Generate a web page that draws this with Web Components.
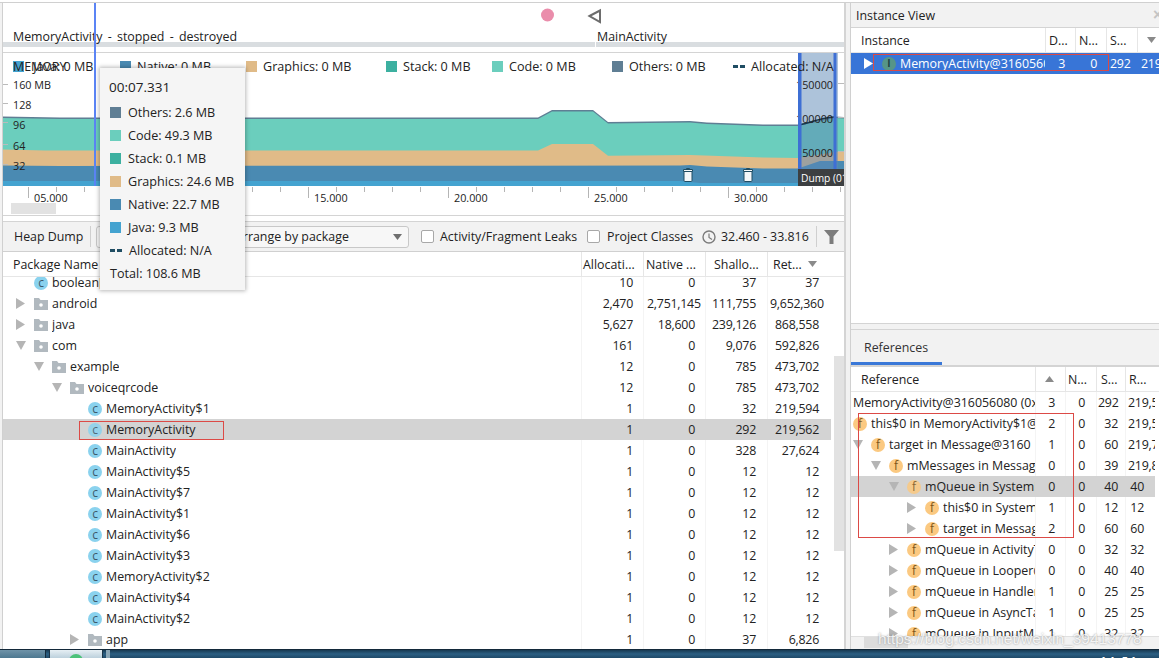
<!DOCTYPE html>
<html lang="en"><head><meta charset="utf-8"><title>Memory Profiler</title>
<style>
html,body{margin:0;padding:0;background:#fff;overflow:hidden}
body{width:1159px;height:658px;font:12.4px "Open Sans","Noto Sans",sans-serif;color:#222}
</style></head><body>
<profiler-app></profiler-app>
<script>
const FONT='"Open Sans","Noto Sans",sans-serif';
function shadow(el,html){el.attachShadow({mode:'open'}).innerHTML=html;return el.shadowRoot}

class TreeGlyph extends HTMLElement{
  connectedCallback(){
    const k=this.getAttribute('kind');
    let inner='';
    if(k==='r'||k==='w')inner=`<svg width="9" height="11" viewBox="0 0 9 11"><path d="M0 0L9 5.5L0 11Z" fill="${k==='w'?'#fff':'#b5b5b5'}"/></svg>`;
    else if(k==='d')inner=`<svg width="10" height="9" viewBox="0 0 10 9"><path d="M0 0H10L5 9Z" fill="#b5b5b5"/></svg>`;
    else if(k==='folder')inner=`<svg width="14" height="12" viewBox="0 0 14 12"><path d="M0 0H5L6.5 2H14V12H0Z" fill="#b1b9bf"/><circle cx="7" cy="7" r="1.8" fill="#fff"/></svg>`;
    else{
      const t={c:'c',f:'f',i:'I'}[k];
      inner=`<b class="${k}">${t}</b>`;
    }
    shadow(this,`<style>
      :host{display:flex;align-items:center;justify-content:flex-start;width:18px;flex:none;height:100%}
      svg{display:block}
      b{width:14px;height:14px;border-radius:50%;display:flex;align-items:center;justify-content:center;font:400 12px/13px ${FONT}}
      .c{background:#8ad2ee;color:#3d5a6b}
      .f{background:#fbc981;color:#7d5518}
      .i{background:#5b9b7c;color:#16382a;font-weight:700;font-size:10px}
      :host([dim]) b{opacity:.86}
    </style>${inner}`);
  }
}
customElements.define('tree-glyph',TreeGlyph);

class TreeRow extends HTMLElement{
  constructor(data,cols,base){
    super();
    const g=(k)=>k?`<tree-glyph kind="${k}" ${data.sel?'dim':''}></tree-glyph>`:'';
    const arrow=data.a==='n'?'<span class="blank"></span>':g(data.a);
    const cells=data.v.map((v,i)=>{const c=cols[i+1];return `<div class="n" style="padding:0 ${c.r}px 0 ${c.l}px">${v}</div>`}).join('');
    shadow(this,`<style>
      :host{display:grid;grid-template-columns:${cols.map(c=>c.w+'px').join(' ')};height:21px;line-height:21px;white-space:nowrap;overflow:hidden;${data.sel?`background:${data.sel};`:''}${data.sel==='#3875d7'?'color:#fff;':''}}
      .t{display:flex;align-items:center;overflow:hidden;padding-left:${base+data.d*18}px;min-width:0}
      .t span.l{overflow:hidden;white-space:nowrap}
      .blank{width:18px;flex:none}
      .n{box-sizing:border-box;text-align:right;min-width:0;white-space:nowrap;letter-spacing:-.25px;border-left:1px solid ${data.sel?'transparent':'#f4f4f4'};${data.clip?'overflow:hidden;':''}}
    </style><div class="t">${arrow}${g(data.i)}<span class="l">${data.t}</span></div>${cells}`);
  }
}
customElements.define('tree-row',TreeRow);

class TreeTable extends HTMLElement{
  setup(cfg){
    const r=shadow(this,`<style>
      :host{display:flex;flex-direction:column;background:#fff;overflow:hidden;min-height:0}
      .h{display:grid;grid-template-columns:${cfg.cols.map(c=>c.w+'px').join(' ')};height:${cfg.hh}px;border-bottom:1px solid #e6e6e6;flex:none;background:#fff;position:relative;z-index:1;white-space:nowrap;overflow:hidden}
      .h div{box-sizing:border-box;overflow:hidden;border-left:1px solid #e6e6e6;display:flex;align-items:center;justify-content:space-between}
      .h div:first-child{border-left:0}
      .b{flex:1;overflow:hidden;min-height:0}
      .in{margin-top:${cfg.off||0}px;width:${cfg.cols.reduce((a,c)=>a+c.w,0)}px}
      svg{flex:none}
    </style><div class="h">${cfg.head.map((h)=>`<div style="padding-left:${h.p}px;padding-right:${h.pr||0}px">${h.t?`<span>${h.t}</span>`:''}${h.s==='d'?'<svg width="9" height="6"><path d="M0 0H9L4.5 6Z" fill="#8a8a8a"/></svg>':h.s==='u'?'<svg width="9" height="6"><path d="M0 6H9L4.5 0Z" fill="#8a8a8a"/></svg>':''}</div>`).join('')}</div><div class="b"><div class="in"></div></div>`);
    const inn=r.querySelector('.in');
    cfg.rows.forEach(d=>inn.appendChild(new TreeRow(d,cfg.cols,cfg.base)));
  }
}
customElements.define('tree-table',TreeTable);

class EventStrip extends HTMLElement{
  connectedCallback(){
    shadow(this,`<style>
      :host{display:block;height:49px;background:#fff;border-bottom:1px solid #d4d4d4;position:relative;flex:none;overflow:hidden}
      svg{position:absolute;left:0;top:0}
      .bar{position:absolute;left:0;right:0;top:39px;height:5px;background:linear-gradient(90deg,#d9dde0 592px,#fff 592px,#fff 593px,#d9dde0 593px)}
      .lab{position:absolute;top:24px;line-height:19px;white-space:nowrap}
    </style>
    <div class="bar"></div>
    <svg width="841" height="30" viewBox="3 3 841 30"><circle cx="547.5" cy="15" r="6.5" fill="#ea8dab"/><path d="M589.5 16L600 10.5V22Z" fill="none" stroke="#6d6d6d" stroke-width="2"/></svg>
    <span class="lab" style="left:10px;word-spacing:2px">MemoryActivity - stopped - destroyed</span>
    <span class="lab" style="left:594px">MainActivity</span>`);
  }
}
customElements.define('event-strip',EventStrip);

class LegendKey extends HTMLElement{
  connectedCallback(){
    const c=this.getAttribute('color');
    shadow(this,`<style>
      :host{display:flex;align-items:center;gap:var(--gap,6px);white-space:nowrap;flex:none;font-size:12.6px}
      i{width:11px;height:11px;background:${c};flex:none;display:block}
      i.dash{height:3px;width:12px;background:linear-gradient(90deg,${c} 5px,transparent 5px,transparent 7px,${c} 7px)}
    </style><i class="${this.hasAttribute('dash')?'dash':''}"></i><span><slot></slot></span>`);
  }
}
customElements.define('legend-key',LegendKey);

class MemoryChart extends HTMLElement{
  connectedCallback(){
    const ticks=[];let labels='';
    for(let x=28;x<844;x+=28){const m=x%140===28;ticks.push(`<path d="M${x+.5} 187V${m?198:192}" stroke="#b5b5b5"/>`);
      if(m&&x!==168){const s=5*((x-28)/140+1);labels+=`<text x="${x+6}" y="202">${String(s).padStart(2,'0')}.000</text>`;}}
    const L=(txt,y)=>`<text x="13" y="${y}">${txt}</text>`;
    const R=(txt,y)=>`<text x="833" y="${y}" text-anchor="end">${txt}</text>`;
    const yt=[84,103,122,144,164].map(y=>`<path d="M3 ${y+.5}H8" stroke="#bbb"/>`).join('');
    const rt=[83,117,151].map(y=>`<path d="M838 ${y+.5}H844" stroke="#bbb"/>`).join('');
    shadow(this,`<style>
      :host{display:block;position:relative;flex:none;height:162px;background:#fff;border-bottom:1px solid #d4d4d4}
      svg{display:block;font-family:${FONT};font-size:10.8px;fill:#222}
      .legend{position:absolute;left:0;top:0;display:flex;height:26px;padding-left:10px}
      .legend legend-key{width:var(--w)}
      .title{position:absolute;left:10px;top:4px;line-height:19px}
      .thumb{position:absolute;left:8px;top:150px;width:45px;height:11px;background:#e2e2e2}
    </style>
    <svg width="841" height="133" viewBox="3 53 841 133">
      <polygon fill="#5f7e94" points="3,116.5 60,117.5 538,117.5 552,110 593,110 608,122 690,121 707,122.5 763,124.5 798,124.5 835,116.5 844,117 844,186 3,186"/>
      <polygon fill="#6bcebd" points="3,118 60,119 538,119 552,111.5 593,111.5 608,123.5 690,122.5 707,124 763,126 798,126 835,118 844,118.5 844,186 3,186"/>
      <polygon fill="#e0bb88" points="3,149.5 45,150.5 538,150.5 552,144 593,144 608,155.7 690,155 763,157.5 798,158 835,152 844,151 844,186 3,186"/>
      <polygon fill="#4a8ab2" points="3,165.5 60,166 680,165.5 690,165 707,166.5 763,168.5 798,168.5 820,161 844,161 844,186 3,186"/>
      <polygon fill="#44a3d0" points="3,181 680,181 700,183 844,183 844,186 3,186"/>
      ${yt}${rt}
      ${L('160 MB',89)}${L('128',109)}${L('96',129)}${L('64',150)}${L('32',169.5)}
      ${[688,748].map(x=>`<g transform="translate(${x-5} 168)" fill="#f4f7f9" stroke="#1f4d63" stroke-width="1"><path d="M1 3.500H9V12.500Q9 13.500 8 13.500H2Q1 13.500 1 12.500Z"/><path d="M.5 1.500H9.500V3.500H.5Z"/><path d="M3.500 1.500V.5H6.500V1.500" fill="none"/></g>`).join('')}
      <rect x="798" y="53" width="40" height="133" fill="#5c87b5" fill-opacity=".5"/>
      <path d="M801 124.500C812 122 820 118 834 117" fill="none" stroke="#17384c" stroke-width="1.500"/>
      ${R('150000',89)}${R('100000',123)}${R('50000',157)}
      <rect x="798" y="53" width="3.500" height="133" fill="#3e6fd4"/><rect x="833.500" y="53" width="3" height="133" fill="#3e6fd4"/>
      <rect x="798" y="169" width="46" height="17" fill="#3c3f41"/>
      <text x="801" y="181.500" style="fill:#fff;font-size:10.200px">Dump (01</text>
    </svg>
    <svg class="axis" width="841" height="30" viewBox="3 186 841 30">${ticks.join('')}${labels}</svg>
    <div class="thumb"></div>
    <div class="legend">
      <legend-key style="--w:107px" color="#44a3d0"><span>&nbsp;Java: 0 MB</span></legend-key>
      <legend-key style="--w:126px" color="#4a8ab2">Native: 0 MB</legend-key>
      <legend-key style="--w:140px" color="#e0bb88">Graphics: 0 MB</legend-key>
      <legend-key style="--w:106px" color="#3cb0a0">Stack: 0 MB</legend-key>
      <legend-key style="--w:120px" color="#6bcebd">Code: 0 MB</legend-key>
      <legend-key style="--w:121px" color="#5f7e94">Others: 0 MB</legend-key>
      <legend-key style="--w:110px" color="#1f4d63" dash>Allocated: N/A</legend-key>
    </div>
    <div class="title">MEMORY</div>`);
  }
}
customElements.define('memory-chart',MemoryChart);

class HeapToolbar extends HTMLElement{
  connectedCallback(){
    shadow(this,`<style>
      :host{display:flex;align-items:center;height:29px;margin-top:5px;background:#f2f2f2;border-top:1px solid #d4d4d4;border-bottom:1px solid #d0d0d0;padding-left:11px;white-space:nowrap;flex:none}
      .sep{width:1px;height:21px;background:#cfcfcf;flex:none}
      .combo{box-sizing:border-box;width:313px;height:22px;margin-left:5px;border:1px solid #c8c8c8;border-radius:3px;background:#f7f7f7;display:flex;align-items:center;justify-content:space-between;padding:0 6px 0 138px;flex:none}
      .cb{width:11px;height:11px;border:1px solid #a8a8a8;border-radius:2px;background:#fff;flex:none}
      svg{display:block;flex:none}
    </style>
    <span style="width:76px">Heap Dump</span><span class="sep"></span>
    <div class="combo"><span>Arrange by package</span><svg width="9" height="6"><path d="M0 0H9L4.500 6Z" fill="#6f6f6f"/></svg></div>
    <span class="cb" style="margin-left:12px"></span><span style="margin-left:6px;width:142px">Activity/Fragment Leaks</span>
    <span class="cb" style="margin-left:5px"></span><span style="margin-left:7px;width:95px">Project Classes</span>
    <svg width="14" height="14" viewBox="0 0 14 14"><circle cx="7" cy="7" r="6" fill="none" stroke="#7b7b7b" stroke-width="1.400"/><path d="M7 3.500V7.500L10 9.500" fill="none" stroke="#7b7b7b" stroke-width="1.200"/></svg>
    <span style="margin-left:5px;width:95px">32.460 - 33.816</span>
    <span class="sep"></span>
    <svg style="margin-left:7px" width="15" height="14" viewBox="0 0 15 14"><path d="M0 0H15L9.500 6.500V14H5.500V6.500Z" fill="#7c7c7c"/></svg>`);
  }
}
customElements.define('heap-toolbar',HeapToolbar);

class TabTitle extends HTMLElement{
  connectedCallback(){
    shadow(this,`<style>
      :host{display:flex;align-items:center;justify-content:space-between;height:24px;background:#f2f2f2;border-bottom:1px solid #d4d4d4;padding:0 0 0 5px;flex:none}
      i{color:#c4c4c4;font:700 16px/16px "Liberation Sans",sans-serif;width:6px;overflow:hidden}
    </style><span><slot></slot></span><i>×</i>`);
  }
}
customElements.define('tab-title',TabTitle);

class ProfilerApp extends HTMLElement{
  connectedCallback(){
    const r=shadow(this,`<style>
      :host{display:block;position:relative;width:1159px;height:658px;overflow:hidden;background:#fff}
      .top{height:2px;background:#fff;border-bottom:1px solid #d0d0d0}
      .main{display:flex;height:646px;padding-left:2px;background:#f2f2f2}
      .left{width:841px;border-left:1px solid #d0d0d0;border-right:2px solid #d4d4d4;display:flex;flex-direction:column;background:#fff;flex:none}
      .gut{width:4px;flex:none}
      .right{flex:1;border-left:1px solid #d0d0d0;display:flex;flex-direction:column;min-width:0;background:#fff}
      .inst{height:320px;flex:none;border-bottom:1px solid #d4d4d4;display:flex;flex-direction:column}
      .inst tree-table{flex:1}
      .gap{height:5px;background:#f2f2f2;border-bottom:1px solid #d4d4d4;flex:none}
      .tabs{height:35px;background:#f2f2f2;border-bottom:2px solid #d4d4d4;flex:none}
      .tabs span{display:inline-block;box-sizing:border-box;width:91px;height:35px;line-height:35px;padding-left:13px;border-bottom:3px solid #3a78d8;color:#333}
      .refs{flex:1;min-height:0}
      .hs{height:12px;flex:none;background:#f2f2f2;border-top:1px solid #e0e0e0;display:flex}
      .hs i{display:block;width:44px;height:11px;margin-left:13px;background:#dcdcdc}
      #heap{flex:1}
      .task{height:9px;background:linear-gradient(#183a52,#2b5f83 4px,#1f4a69);display:flex;border-top:1px solid #13293a;box-sizing:border-box;overflow:hidden;position:relative}
      .task .a{width:45px;background:linear-gradient(#6f93a8,#4d7890);border-right:1px solid #122b3d}
      .task .b{width:52px;margin-left:3px;background:linear-gradient(#e6eff4,#bcd0dc);border:1px solid #1b3548;border-width:0 1px;display:flex;justify-content:center}
      .task .b i{display:block;width:14px;height:14px;margin-top:4px;border-radius:50%;background:#4cc27a}
      .task .c{width:4px;margin-left:3px;background:#8aa6b6}
      .task .clock{position:absolute;left:1100px;top:4px;color:#fff;font:700 11px/14px ${FONT};letter-spacing:2px}
      .cursor{position:absolute;left:93.500px;top:3px;width:2px;height:183px;background:#5b84f5}
      .tip{position:absolute;left:100px;top:68px;width:145px;height:222px;box-sizing:border-box;background:#f5f5f5;box-shadow:0 0 4px 1px rgba(0,0,0,.28);padding:9px 0 0 10px;display:flex;flex-direction:column;z-index:5;white-space:nowrap;--gap:7px}
      .tip .time{font-size:13.500px;line-height:20px;margin-bottom:4px;margin-left:-1px}
      .tip legend-key{height:23px}
      .tip .tot{line-height:23px;font-size:12.600px}
      .box{position:absolute;box-sizing:border-box;border:1px solid #dc4a46;pointer-events:none;z-index:4}
      .wm{position:absolute;left:878px;top:629px;font:15.500px/20px "Liberation Sans",sans-serif;color:rgba(255,255,255,.85);text-shadow:0 0 2px rgba(90,90,90,.65);white-space:nowrap;z-index:6}
    </style>
    <div class="top"></div>
    <div class="main">
      <div class="left">
        <event-strip></event-strip>
        <memory-chart></memory-chart>
        <heap-toolbar></heap-toolbar>
        <tree-table id="heap"></tree-table>
      </div>
      <div class="gut"></div>
      <div class="right">
        <div class="inst"><tab-title>Instance View</tab-title><tree-table id="inst"></tree-table></div>
        <div class="gap"></div>
        <div class="tabs"><span>References</span></div>
        <tree-table id="refs" class="refs"></tree-table>
        <div class="hs"><i></i></div>
      </div>
    </div>
    <div class="task"><div class="a"></div><div class="b"><i></i></div><div class="c"></div><span class="clock">14:51</span></div>
    <div class="cursor"></div>
    <div class="tip">
      <div class="time">00:07.331</div>
      <legend-key color="#5f7e94">Others: 2.6 MB</legend-key>
      <legend-key color="#6bcebd">Code: 49.3 MB</legend-key>
      <legend-key color="#3cb0a0">Stack: 0.1 MB</legend-key>
      <legend-key color="#e0bb88">Graphics: 24.6 MB</legend-key>
      <legend-key color="#4a8ab2">Native: 22.7 MB</legend-key>
      <legend-key color="#44a3d0">Java: 9.3 MB</legend-key>
      <legend-key color="#1f4d63" dash>Allocated: N/A</legend-key>
      <div class="tot">Total: 108.6 MB</div>
    </div>
    <div style="position:absolute;left:834px;top:356px;width:10px;height:195px;background:#e2e2e2"></div>
    <div class="box" style="left:79px;top:421px;width:145px;height:19px"></div>
    <div class="box" style="left:873px;top:54px;width:236px;height:17px"></div>
    <div class="box" style="left:858px;top:413px;width:216px;height:125px"></div>
    <div class="wm">https://blog.csdn.net/weixin_39413778</div>`);

    const S='#d3d3d3';
    const hc=[{w:578},{w:62,l:3,r:10},{w:62,l:3,r:10},{w:62,l:3,r:11},{w:64,l:2,r:12}];
    const rowH=(t,a,i,d,v,sel)=>({t,a,i,d,v,sel});
    const heapRows=[
      rowH('boolean[]','n','c',0,['10','0','37','37']),
      rowH('android','r','folder',0,['2,470','2,751,145','111,755','9,652,360']),
      rowH('java','r','folder',0,['5,627','18,600','239,126','868,558']),
      rowH('com','d','folder',0,['161','0','9,076','592,826']),
      rowH('example','d','folder',1,['12','0','785','473,702']),
      rowH('voiceqrcode','d','folder',2,['12','0','785','473,702']),
      rowH('MemoryActivity$1','n','c',3,['1','0','32','219,594']),
      rowH('MemoryActivity','n','c',3,['1','0','292','219,562'],S),
      rowH('MainActivity','n','c',3,['1','0','328','27,624']),
      ...['MainActivity$5','MainActivity$7','MainActivity$1','MainActivity$6','MainActivity$3','MemoryActivity$2','MainActivity$4','MainActivity$2'].map(t=>rowH(t,'n','c',3,['1','0','12','12'])),
      rowH('app','r','folder',3,['1','0','37','6,826'])
    ];
    r.getElementById('heap').setup({cols:hc,hh:24,off:-5,base:13,rows:heapRows,head:[
      {t:'Package Name',p:10},{t:'Allocati...',p:1},{t:'Native ...',p:2},{t:'Shallo...',p:8},{t:'Ret...',p:5,s:'d',pr:14}]});

    const ic=[{w:194},{w:30,l:2,r:10},{w:31,l:2,r:9},{w:31,l:3,r:8},{w:22,l:3,r:0}];
    r.getElementById('inst').setup({cols:ic,hh:24,base:13,head:[
      {t:'Instance',p:10},{t:'D...',p:3},{t:'N...',p:3},{t:'S...',p:3},{t:'',p:9,s:'d'}],
      rows:[{t:'MemoryActivity@316056080',a:'w',i:'i',d:0,v:['3','0','292','219,562'],sel:'#3875d7',clip:1}]});

    const rc=[{w:184},{w:30,l:2,r:10},{w:31,l:2,r:11},{w:29,l:1,r:7},{w:30,l:2,r:11}];
    const q=(t,a,d,v,sel)=>({t,a,i:'f',d,v,sel});
    r.getElementById('refs').setup({cols:rc,hh:24,base:2,head:[
      {t:'Reference',p:10},{t:'',p:9,s:'u'},{t:'N...',p:2},{t:'S...',p:4},{t:'R...',p:3}],
      rows:[
        {t:'MemoryActivity@316056080 (0x',d:0,v:['3','0','292','219,562']},
        q('this$0 in MemoryActivity$1@',undefined,0,['2','0','32','219,594']),
        q('target in Message@3160','d',0,['1','0','60','219,744']),
        q('mMessages in Messag','d',1,['0','0','39','219,804']),
        q('mQueue in SystemM','d',2,['0','0','40','40'],S),
        q('this$0 in System','r',3,['1','0','12','12']),
        q('target in Messag','r',3,['2','0','60','60']),
        q('mQueue in ActivityT','r',2,['0','0','32','32']),
        q('mQueue in Looper@','r',2,['0','0','40','40']),
        q('mQueue in Handler','r',2,['1','0','25','25']),
        q('mQueue in AsyncTa','r',2,['1','0','25','25']),
        q('mQueue in InputM','r',2,['1','0','32','32'])
      ]});
  }
}
customElements.define('profiler-app',ProfilerApp);
</script>
</body></html>
